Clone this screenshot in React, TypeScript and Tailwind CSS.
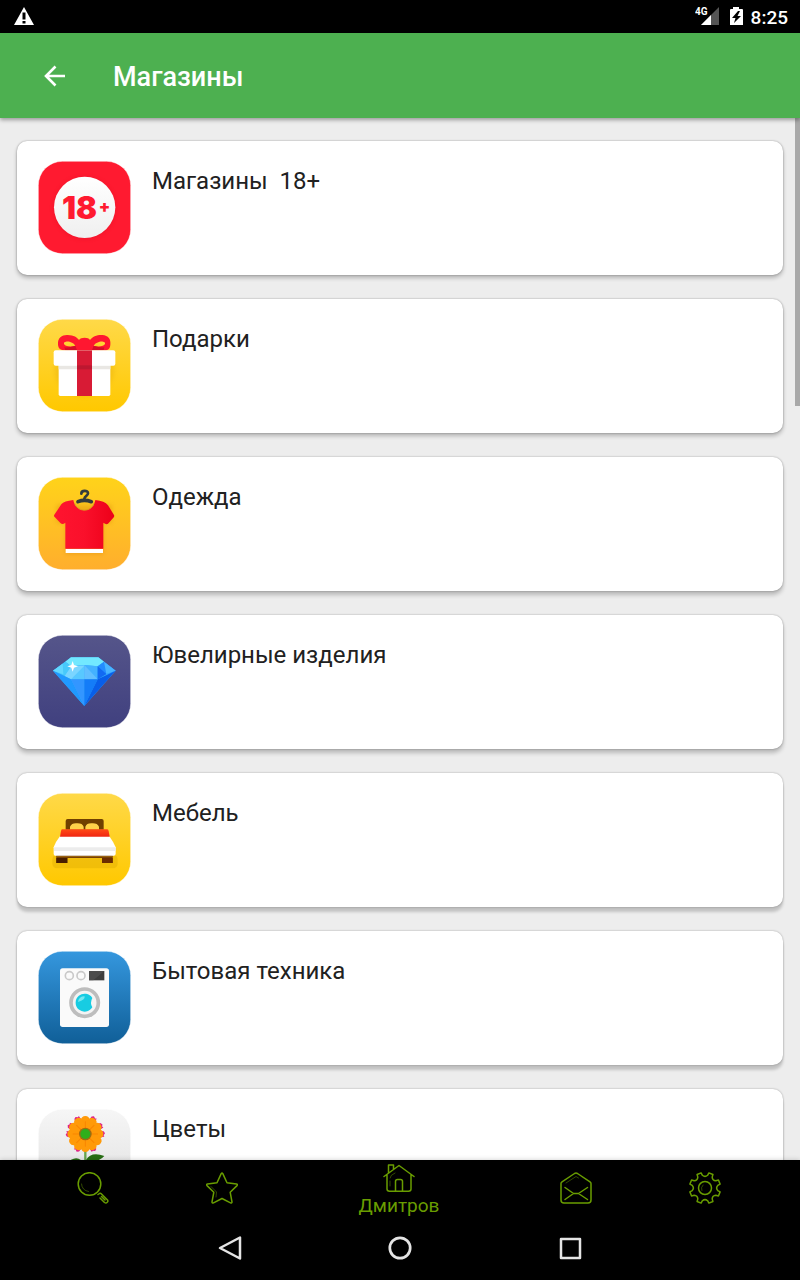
import type { ReactNode } from "react";

const LIME = "#699d00";

function Tile({ id, from, to, children }: { id: string; from: string; to: string; children: ReactNode }) {
  return (
    <svg viewBox="24 27 279 279" className="size-[93px] shrink-0" aria-hidden="true">
      <defs>
        <linearGradient id={id} x1="0" y1="0" x2="0" y2="1">
          <stop offset="0" stopColor={from} />
          <stop offset="1" stopColor={to} />
        </linearGradient>
        <filter id={`${id}-soft`} x="-30%" y="-30%" width="160%" height="160%">
          <feGaussianBlur stdDeviation="7" />
        </filter>
      </defs>
      <rect x="25" y="28" width="277" height="277" rx="72" fill={`url(#${id})`} stroke="#fff" strokeOpacity="0.45" strokeWidth="3" />
      {children}
    </svg>
  );
}

function AdultIcon() {
  return (
    <Tile id="adult" from="#ff1a30" to="#ff1a30">
      <defs>
        <linearGradient id="disc" x1="0" y1="0" x2="0" y2="1">
          <stop offset="0" stopColor="#fff" />
          <stop offset="1" stopColor="#efefef" />
        </linearGradient>
      </defs>
      <circle cx="164" cy="168" r="93" fill="#c8001a" opacity="0.25" filter="url(#adult-soft)" />
      <circle cx="164" cy="166" r="92" fill="url(#disc)" />
      <g fill="#ff1a30" fontFamily="Inter, sans-serif" fontWeight="900">
        <text x="96" y="200" fontSize="93">18</text>
        <text x="206" y="181" fontSize="50">+</text>
      </g>
    </Tile>
  );
}

function GiftIcon() {
  return (
    <Tile id="gift" from="#ffd948" to="#ffc800">
      <ellipse cx="163" cy="180" rx="90" ry="80" fill="#d99b00" opacity="0.25" filter="url(#gift-soft)" />
      <path fillRule="evenodd" fill="#ff1730" d="M84 104C82 82 98 74 113 75C132 76 141 82 147 90C152 81 176 81 180 90C187 80 202 74 217 75C235 76 243 88 241 104C240 118 232 122 220 121H105C92 121 85 115 84 104ZM102 101C104 108 116 111 136 108C132 98 116 93 108 95C103 96 101 98 102 101ZM225 101C223 108 210 111 191 108C195 98 212 93 219 95C224 96 226 98 225 101Z" />
      <path fill="#d40f28" d="M103 112Q120 113 136 107L141 121H106ZM223 112Q207 113 191 107L186 121H221Z" />
      <path fill="#fff" d="M86 160H241V253Q241 258 236 258H91Q86 258 86 253Z" />
      <path fill="#e9e7e3" d="M86 166H241V178H86Z" />
      <rect x="71" y="121" width="185" height="46" rx="6" fill="#fff" />
      <path fill="#d81b35" d="M141 121H186V258H141Z" />
      <path fill="#bd1730" d="M141 166H186V178H141Z" />
    </Tile>
  );
}

function ShirtIcon() {
  return (
    <Tile id="shirt" from="#ffd31a" to="#ffae2d">
      <defs>
        <linearGradient id="cloth">
          <stop offset="0" stopColor="#ff142f" />
          <stop offset="0.5" stopColor="#fa102b" />
          <stop offset="1" stopColor="#ed0019" />
        </linearGradient>
      </defs>
      <path fill="#c77600" opacity="0.3" filter="url(#shirt-soft)" d="M80 110H245V165H220V258H106V165H80Z" />
      <path fill="none" stroke="#333b3d" strokeWidth="8" strokeLinecap="round" d="M154 77C154 66 174 66 174 76C174 84 163 83 163 93" />
      <path fill="none" stroke="#333b3d" strokeWidth="11" strokeLinecap="round" strokeLinejoin="round" d="M144 101Q163 93 184 101" />
      <path fill="url(#cloth)" d="M130 96C137 137 189 137 196 96Q224 99 234 112L252 141Q254 145 250 149L234 167Q229 171 220 164V242H106V164Q98 171 92 166L74 147Q70 143 74 139L94 109Q102 99 130 96Z" />
      <path fill="none" stroke="#d9a11c" strokeWidth="3" d="M134 106C143 133 184 133 192 106" />
      <path fill="#fff" d="M107 243H219V255H107Z" />
    </Tile>
  );
}

function DiamondIcon() {
  return (
    <Tile id="gem" from="#55558a" to="#40407f">
      <path fill="#35aef8" d="M69 134L123 94H205L257 134L163 240Z" />
      <path fill="#72e8ff" d="M123 94H205L222 107L203 121L163 117L124 121L106 107Z" />
      <path fill="#47c9fb" d="M69 134L106 107L124 121L104 150L90 143Z" />
      <path fill="#63d7ff" d="M69 134L98 113L100 145Z" />
      <path fill="#58c8ff" d="M124 121L163 117V160H123L104 150Z" />
      <path fill="#7ad5ff" d="M124 121L104 150L123 160L163 119Z" />
      <path fill="#44b1ff" d="M163 117L203 121V160H163Z" />
      <path fill="#62bfff" d="M163 160V117L203 160Z" />
      <path fill="#238cff" d="M203 121L222 107L257 134L230 144L203 160Z" />
      <path fill="#126af2" d="M203 121L229 144L203 160Z" />
      <path fill="#49b4ff" d="M222 107L257 134L229 144Z" />
      <path fill="#2099ff" d="M69 134L123 160L163 240Z" />
      <path fill="#3396ff" d="M123 160H163V240Z" />
      <path fill="#147cf8" d="M163 160H203L163 240Z" />
      <path fill="#095ee9" d="M203 160L257 134L163 240Z" />
      <path fill="#fff" d="M128 105L132 117L144 121L132 125L128 137L124 125L112 121L124 117Z" />
    </Tile>
  );
}

function BedIcon() {
  return (
    <Tile id="bed" from="#ffd948" to="#ffc800">
      <defs>
        <linearGradient id="blanket" x1="0" y1="0" x2="0" y2="1">
          <stop offset="0" stopColor="#ff4a16" />
          <stop offset="1" stopColor="#f02612" />
        </linearGradient>
      </defs>
      <rect x="67" y="213" width="196" height="40" rx="14" fill="#dba900" opacity="0.4" />
      <path fill="#704000" d="M107 137V111Q107 105 113 105H215Q221 105 221 111V137Z" />
      <path fill="#ffd34a" d="M120 137V128Q125 117 140 118Q157 117 161 128V137ZM166 137V128Q170 117 186 118Q202 117 207 128V137Z" />
      <path fill="#6b3600" d="M79 208H248V237H216V222H112V237H79Z" />
      <path fill="#9a6210" d="M79 216H248V220H79Z" />
      <path fill="#481d00" d="M79 222H112V237H79Z" />
      <path fill="#6b2c00" d="M216 222H248V237H216Z" />
      <path fill="#fff" d="M91 155H237Q251 174 257 190V209Q257 215 251 215H76Q71 215 71 209V190Q77 172 91 155Z" />
      <path fill="#ececec" d="M72 190H257V201H72Z" />
      <path fill="url(#blanket)" d="M96 136H232Q235 136 236 141L239 158H90L93 141Q94 136 96 136Z" />
    </Tile>
  );
}

function WasherIcon() {
  return (
    <Tile id="washer" from="#3597de" to="#105f98">
      <rect x="90" y="79" width="147" height="176" rx="8" fill="#fafafa" />
      <g fill="#fafafa" stroke="#c9c9c9" strokeWidth="5">
        <circle cx="118" cy="101" r="12" />
        <circle cx="153" cy="101" r="12" />
      </g>
      <path fill="#3d3d3d" d="M177 87H223V115H177Z" />
      <path fill="#555" d="M177 87H223L190 115H177Z" opacity="0.6" />
      <circle cx="164" cy="182" r="41" fill="#f3f3f3" stroke="#bdbdbd" strokeWidth="11" />
      <path fill="#17cce2" d="M187 168A27 27 0 1 0 187 196Q179 183 187 168Z" />
      <path fill="#75e8f1" d="M144 180Q146 163 164 163Q166 174 144 180Z" />
    </Tile>
  );
}

function FlowerIcon() {
  return (
    <Tile id="flower" from="#f6f6f6" to="#dedede">
      <path stroke="#67a64c" strokeWidth="7" d="M166 150V270" />
      <path fill="#286f14" d="M166 184Q180 153 223 168Q207 187 166 187ZM160 190Q147 166 123 179Q140 193 160 195Z" />
      <g transform="translate(166 102)">
        {[28, 62, 90, 152, 208, 270, 298, 332].map((angle) => (
          <path key={angle} fill="#e0218a" d="M-10 -42L-8 -55L-2 -59L4 -55L8 -57L10 -42Z" transform={`rotate(${angle})`} />
        ))}
        {[0, 30, 60, 90, 120, 150, 180, 210, 240, 270, 300, 330].map((angle) => (
          <path key={angle} fill="#ff9a08" d="M0 0L-14 -40Q-12 -54 0 -54Q12 -54 14 -40Z" transform={`rotate(${angle})`} />
        ))}
        {[0, 45, 90, 135, 180, 225, 270, 315].map((angle) => (
          <path key={angle} stroke="#f98500" strokeWidth="3" d="M0 -12V-38" transform={`rotate(${angle})`} />
        ))}
        <circle r="19" fill="#a06a12" />
        <circle r="15" fill="#2fae1b" />
      </g>
    </Tile>
  );
}

const LOW = "shadow-[0_0_2px_rgba(0,0,0,0.35),0_3px_4px_rgba(0,0,0,0.24)]";
const MID = "shadow-[0_0_2px_rgba(0,0,0,0.35),0_4px_4px_rgba(0,0,0,0.22)]";
const HIGH = "shadow-[0_0_2px_rgba(0,0,0,0.35),0_5px_3px_rgba(0,0,0,0.18)]";

const categories = [
  { title: "Магазины  18+", icon: <AdultIcon />, shadow: LOW },
  { title: "Подарки", icon: <GiftIcon />, shadow: LOW },
  { title: "Одежда", icon: <ShirtIcon />, shadow: MID },
  { title: "Ювелирные изделия", icon: <DiamondIcon />, shadow: MID },
  { title: "Мебель", icon: <BedIcon />, shadow: HIGH },
  { title: "Бытовая техника", icon: <WasherIcon />, shadow: HIGH },
  { title: "Цветы", icon: <FlowerIcon />, shadow: HIGH },
];

function StatusBar() {
  return (
    <div className="flex h-[33px] shrink-0 items-center bg-black pr-3 pl-[13px] text-white">
      <svg viewBox="0 0 22 20" className="h-5 w-[22px]" aria-hidden="true">
        <path fill="#fff" fillRule="evenodd" d="M11 0L21 18H1ZM9.5 5.500V12.500H12.500V5.500ZM9.500 14V16.500H12.500V14Z" />
      </svg>
      <svg viewBox="0 0 26 22" className="ml-auto h-[22px] w-[26px]" aria-label="4G">
        <path fill="#555" d="M24 1V19H6Z" />
        <path fill="#fff" d="M16 9V19H6Z" />
        <text x="0" y="9" fill="#fff" fontFamily="Roboto, sans-serif" fontWeight="700" fontSize="10">4G</text>
      </svg>
      <svg viewBox="0 0 14 20" className="ml-2 h-5 w-3.5" aria-hidden="true">
        <path fill="#fff" d="M4 0H10V2H13Q14 2 14 3V18H1V3Q1 2 2 2H4Z" />
        <path fill="#000" d="M9 4L3 11H6.500L5 16L12 9H8.500L11 4Z" />
      </svg>
      <span className="ml-2 pt-0.5 text-[19px] leading-6 font-medium">8:25</span>
    </div>
  );
}

function gearPath() {
  const point = (deg: number, r: number) => {
    const a = (deg * Math.PI) / 180;
    return `${(16 + r * Math.sin(a)).toFixed(2)} ${(16 - r * Math.cos(a)).toFixed(2)}`;
  };
  let d = "";
  for (let i = 0; i < 8; i++) {
    const c = i * 45 + 22.5;
    d += `${i ? "L" : "M"}${point(c - 11, 13)}L${point(c - 8, 15.6)}L${point(c + 8, 15.6)}L${point(c + 11, 13)}Q${point(c + 22.5, 10.5)} ${point(c + 34, 13)}`;
  }
  return d + "Z";
}

function TabIcon({ children }: { children: ReactNode }) {
  return (
    <svg viewBox="0 0 32 32" className="size-8" fill="none" stroke={LIME} strokeWidth="1.5" strokeLinecap="round" strokeLinejoin="round" aria-hidden="true">
      {children}
    </svg>
  );
}

const tab = "flex w-[129px] items-center justify-center";

function Tabs() {
  return (
    <nav className="flex h-14 justify-center pr-0.5">
      <button type="button" aria-label="Поиск" className={tab}>
        <TabIcon>
          <circle cx="12.500" cy="12" r="11.300" />
          <path d="M4.500 12Q5 18.500 11.500 19.500" strokeWidth="0.8" opacity="0.6" />
          <path d="M21 22.500L22.500 21.500Q23.500 21 24.500 22L30.500 28Q31.500 29.500 30 30.500Q29 31.500 27.500 30.500L23 26M24.500 24.500L28 28" />
        </TabIcon>
      </button>
      <button type="button" aria-label="Избранное" className={tab}>
        <TabIcon>
          <path d="M15.200 1.600Q16 .5 16.800 1.600L21 10.800L30.500 12Q32 12.400 31 13.600L24.200 20.300L26 30Q25.900 31.500 24.500 30.900L16 26.500L7.500 30.900Q6 31.500 6 30L7.800 20.300L1 13.600Q0 12.400 1.500 12L11 10.800Z" />
          <path d="M5 14.500L10.500 20L10 25" strokeWidth="0.8" opacity="0.6" />
        </TabIcon>
      </button>
      <button type="button" className="flex w-[225px] flex-col items-center gap-1 pt-1">
        <svg viewBox="0 0 32 28" className="h-7 w-8 shrink-0" fill="none" stroke={LIME} strokeWidth="1.500" strokeLinecap="round" strokeLinejoin="round" aria-hidden="true">
          <path d="M1 12.500L16 1.500L31 12.500M4 10.500V25Q4 27.200 6.500 27.200H25.500Q28 27.200 28 25V10.500M5.500 9V1H10.500V5.500M12.500 27.200V17.500Q12.500 15.500 14.500 15.500H17.500Q19.500 15.500 19.500 17.500V27.200" />
          <path d="M7 14Q7 11 12 9M7 17V22" strokeWidth="0.800" opacity="0.600" />
        </svg>
        <span className="text-[19px] leading-5 text-[#699d00]">Дмитров</span>
      </button>
      <button type="button" aria-label="Сообщения" className={tab}>
        <TabIcon>
          <path d="M1 11.500Q1 10.500 2 9.800L14.500 1.500Q16 .7 17.500 1.500L30 9.800Q31 10.500 31 11.500V28Q31 31 28 31H4Q1 31 1 28Z" />
          <path d="M5 15.500L13.500 21.500H18.500L27.500 15.500M5 27.500L13.500 21.500M18.500 21.500L27.500 27.500" />
          <path d="M6 11L16 4.500L18.500 6" strokeWidth="0.8" opacity="0.6" />
        </TabIcon>
      </button>
      <button type="button" aria-label="Настройки" className={tab}>
        <TabIcon>
          <path d={gearPath()} />
          <circle cx="16" cy="16" r="6.500" />
          <path d="M12.800 18.500Q11.500 15.500 14 13" strokeWidth="0.8" opacity="0.6" />
        </TabIcon>
      </button>
    </nav>
  );
}

const systemKey = "flex w-[170px] items-center justify-center";

function SystemKeys() {
  return (
    <div className="flex h-16 justify-center">
      <button type="button" aria-label="Назад" className={systemKey}>
        <svg viewBox="0 0 26 26" className="size-[26px]" fill="none" stroke="#e4e4e4" strokeWidth="2.500" strokeLinejoin="round" aria-hidden="true">
          <path d="M23 2.500V23.500L3 13Z" />
        </svg>
      </button>
      <button type="button" aria-label="Домой" className={systemKey}>
        <svg viewBox="0 0 26 26" className="size-[26px]" fill="none" stroke="#e4e4e4" strokeWidth="2.700" aria-hidden="true">
          <circle cx="13" cy="13" r="10.200" />
        </svg>
      </button>
      <button type="button" aria-label="Обзор" className={systemKey}>
        <svg viewBox="0 0 26 26" className="size-[26px]" fill="none" stroke="#e4e4e4" strokeWidth="2.500" strokeLinejoin="round" aria-hidden="true">
          <path d="M4 4H23V23H4Z" />
        </svg>
      </button>
    </div>
  );
}

export default function App() {
  return (
    <div className="flex h-screen flex-col bg-[#ededed] font-['Roboto',sans-serif]">
      <StatusBar />
      <header className="z-10 flex h-[85px] shrink-0 items-center bg-[#4db050] pl-[38px] text-white shadow-[0_2px_4px_rgba(0,0,0,0.35)]">
        <button type="button" aria-label="Назад" className="size-8">
          <svg viewBox="0 0 32 32" className="size-8" fill="none" stroke="#fff" strokeWidth="2.600" aria-hidden="true">
            <path d="M27 16H8M17.500 6.500L8 16L17.500 25.500" />
          </svg>
        </button>
        <h1 className="ml-[43px] pt-0.5 text-[27px] leading-8 font-medium">Магазины</h1>
      </header>
      <main className="relative min-h-0 flex-1">
        <ul className="flex h-full flex-col gap-6 overflow-y-auto px-[17px] pt-[23px] pb-6 [scrollbar-width:none]">
          {categories.map(({ title, icon, shadow }) => (
            <li key={title} className={`shrink-0 rounded-[10px] bg-white ${shadow}`}>
              <a href="#" className="flex gap-[21px] px-[21px] pt-5 pb-[21px]">
                {icon}
                <span className="mt-1 text-2xl leading-8 whitespace-pre text-[#212121]">{title}</span>
              </a>
            </li>
          ))}
        </ul>
        <div className="absolute top-0 right-0 h-72 w-[5px] bg-[#a9a9a9]" />
      </main>
      <footer className="z-10 shrink-0 bg-black shadow-[0_0_5px_rgba(0,0,0,0.2)]">
        <Tabs />
        <SystemKeys />
      </footer>
    </div>
  );
}
